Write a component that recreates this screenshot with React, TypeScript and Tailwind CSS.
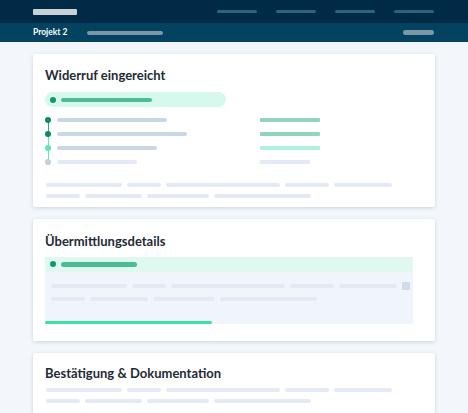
import React from "react";

function TextLines() {
  return (
    <div className="flex flex-col gap-[7px]">
      <div className="flex gap-[5px] items-center">
        <div className="w-[76px] h-[4px] rounded-full bg-[#e3eaf5]" />
        <div className="w-[34px] h-[4px] rounded-full bg-[#e3eaf5]" />
        <div className="w-[114px] h-[4px] rounded-full bg-[#e3eaf5]" />
        <div className="w-[44px] h-[4px] rounded-full bg-[#e3eaf5]" />
        <div className="w-[58px] h-[4px] rounded-full bg-[#e3eaf5]" />
      </div>
      <div className="flex gap-[5px] items-center">
        <div className="w-[34px] h-[4px] rounded-full bg-[#e3eaf5]" />
        <div className="w-[57px] h-[4px] rounded-full bg-[#e3eaf5]" />
        <div className="w-[62px] h-[4px] rounded-full bg-[#e3eaf5]" />
        <div className="w-[97px] h-[4px] rounded-full bg-[#e3eaf5]" />
      </div>
    </div>
  );
}

export default function App() {
  return (
    <div
      className="w-[468px] h-[413px] overflow-hidden bg-[#f3f7fb] flex flex-col"
      style={{ fontFamily: "Lato, 'Noto Sans', sans-serif" }}
    >
      {/* top bar */}
      <div className="h-[23px] bg-[#012a46] flex items-center pl-[33px] pr-[34px] shrink-0">
        <div className="w-[44px] h-[6px] rounded-[1px] bg-[#c9d0d6]" />
        <div className="ml-auto flex gap-[19px] items-center">
          <div className="w-[40px] h-[3px] rounded-full bg-[#2c6480]" />
          <div className="w-[40px] h-[3px] rounded-full bg-[#2c6480]" />
          <div className="w-[40px] h-[3px] rounded-full bg-[#2c6480]" />
          <div className="w-[40px] h-[3px] rounded-full bg-[#2c6480]" />
        </div>
      </div>
      {/* sub bar */}
      <div className="h-[19px] bg-[#03435f] flex items-center pl-[33px] pr-[34px] shrink-0">
        <span className="text-white text-[8.5px] font-bold leading-none">Projekt 2</span>
        <div className="ml-[19px] w-[76px] h-[4px] rounded-full bg-[#7b97a8]" />
        <div className="ml-auto w-[31px] h-[5px] rounded-full bg-[#7b97a8]" />
      </div>

      <div className="flex flex-col gap-[12px] px-[33px] pt-[12px] pb-4">
        {/* Card 1 */}
        <div className="bg-white rounded-[2px] shadow-[0_1px_4px_rgba(30,50,80,0.18)] px-[12px] pt-[11px] pb-[9px]">
          <h2 className="text-[13px] font-bold text-[#1e2a36] leading-[20px]">Widerruf eingereicht</h2>
          <div className="mt-[7px] w-[181px] h-[15px] rounded-full bg-[#d7f8ec] flex items-center pl-[5px]">
            <div className="w-[6px] h-[6px] rounded-full bg-[#0f9a6a]" />
            <div className="ml-[5px] w-[91px] h-[4px] rounded-full bg-[#4cbc94]" />
          </div>
          <div className="mt-[11px] relative flex flex-col gap-[10px]">
            <div className="absolute left-[2.5px] top-[2px] w-[1px] h-[13px] bg-[#2aa87a]" />
            <div className="absolute left-[2.5px] top-[15px] w-[1px] h-[28px] bg-[#5ee6b3]" />
            {[
              { dot: "bg-[#0d8a5f]", w: "w-[110px]", c: "bg-[#cbd6e5]", rc: "bg-[#8fd4bc]", rw: "w-[60px]" },
              { dot: "bg-[#0d8a5f]", w: "w-[130px]", c: "bg-[#cbd6e5]", rc: "bg-[#8fd4bc]", rw: "w-[60px]" },
              { dot: "bg-[#5ee6b3]", w: "w-[100px]", c: "bg-[#cbd6e5]", rc: "bg-[#aef2da]", rw: "w-[60px]" },
              { dot: "bg-[#c4cdd9]", w: "w-[80px]", c: "bg-[#e3eaf5]", rc: "bg-[#e3eaf5]", rw: "w-[50px]" },
            ].map((r, i) => (
              <div key={i} className="flex items-center h-[4px] relative">
                <div className={`w-[6px] h-[6px] rounded-full ${r.dot} shrink-0`} />
                <div className={`ml-[6px] h-[4px] rounded-full ${r.w} ${r.c}`} />
                <div className={`absolute left-[215px] h-[4px] ${r.rw} ${r.rc} rounded-[1px]`} />
              </div>
            ))}
          </div>
          <div className="mt-[19px] pl-[1px]">
            <TextLines />
          </div>
        </div>

        {/* Card 2 */}
        <div className="bg-white rounded-[2px] shadow-[0_1px_4px_rgba(30,50,80,0.18)] px-[12px] pt-[12px] pb-[17px]">
          <h2 className="text-[13px] font-bold text-[#1e2a36] leading-[20px]">Übermittlungsdetails</h2>
          <div className="mt-[6px] w-[368px]">
            <div className="h-[15px] bg-[#dff9f0] flex items-center pl-[5px]">
              <div className="w-[6px] h-[6px] rounded-full bg-[#0f9a6a] -mt-[2px]" />
              <div className="ml-[5px] w-[76px] h-[5px] rounded-full bg-[#4cbc94]" />
            </div>
            <div className="h-[52px] bg-[#f0f5fb] relative pt-[10px] pl-[6px]">
              <div className="flex flex-col gap-[7px]">
                <div className="flex gap-[5px] items-center">
                  <div className="w-[76px] h-[4px] rounded-full bg-[#e3eaf5]" />
                  <div className="w-[34px] h-[4px] rounded-full bg-[#e3eaf5]" />
                  <div className="w-[114px] h-[4px] rounded-full bg-[#e3eaf5]" />
                  <div className="w-[44px] h-[4px] rounded-full bg-[#e3eaf5]" />
                  <div className="w-[58px] h-[4px] rounded-full bg-[#e3eaf5]" />
                  <div className="w-[8px] h-[8px] rounded-[1px] bg-[#d2dbe8]" />
                </div>
                <div className="flex gap-[5px] items-center">
                  <div className="w-[34px] h-[4px] rounded-full bg-[#e3eaf5]" />
                  <div className="w-[58px] h-[4px] rounded-full bg-[#e3eaf5]" />
                  <div className="w-[62px] h-[4px] rounded-full bg-[#e3eaf5]" />
                  <div className="w-[97px] h-[4px] rounded-full bg-[#e3eaf5]" />
                </div>
              </div>
              <div className="absolute left-0 bottom-0 w-[167px] h-[3px] bg-[#3ee0a6] rounded-full" />
            </div>
          </div>
        </div>

        {/* Card 3 */}
        <div className="bg-white rounded-[2px] shadow-[0_1px_4px_rgba(30,50,80,0.18)] px-[12px] pt-[10px] pb-[20px]">
          <h2 className="text-[13px] font-bold text-[#1e2a36] leading-[20px]">Bestätigung &amp; Dokumentation</h2>
          <div className="mt-[5px] pl-[1px]">
            <TextLines />
          </div>
        </div>
      </div>
    </div>
  );
}
